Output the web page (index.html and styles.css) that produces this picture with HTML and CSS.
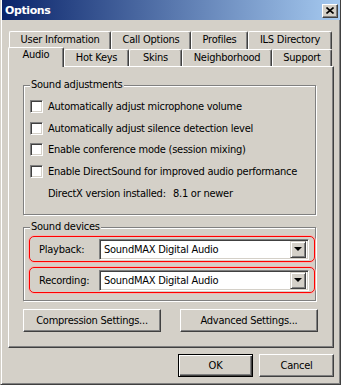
FILE: index.html
```html
<!DOCTYPE html>
<html lang="en">
<head>
    <meta charset="UTF-8">
    <title>Options</title>
    <link rel="stylesheet" href="styles.css">
</head>
<body>
    <div class="window">
        <div class="titlebar">
            <span class="title">Options</span>
            <button class="close-button" aria-label="Close">
                <svg width="8" height="7" viewBox="0 0 8 7">
                    <path d="M0.5 0.5 L7.5 6.5 M7.5 0.5 L0.5 6.5" stroke="#000" stroke-width="1.6" fill="none"/>
                </svg>
            </button>
        </div>

        <div class="tabs">
            <div class="tab-row upper">
                <div class="tab tab-user">User Information</div>
                <div class="tab tab-call">Call Options</div>
                <div class="tab tab-profiles">Profiles</div>
                <div class="tab tab-ils">ILS Directory</div>
            </div>
            <div class="tab-row lower">
                <div class="tab tab-audio active">Audio</div>
                <div class="tab tab-hotkeys">Hot Keys</div>
                <div class="tab tab-skins">Skins</div>
                <div class="tab tab-neighborhood">Neighborhood</div>
                <div class="tab tab-support">Support</div>
            </div>
        </div>

        <div class="panel">
            <fieldset class="group adjustments">
                <legend>Sound adjustments</legend>
                <div class="check-row"><span class="check"></span>Automatically adjust microphone volume</div>
                <div class="check-row"><span class="check"></span>Automatically adjust silence detection level</div>
                <div class="check-row"><span class="check"></span>Enable conference mode (session mixing)</div>
                <div class="check-row"><span class="check"></span>Enable DirectSound for improved audio performance</div>
                <div class="directx-row"><span class="directx-label">DirectX version installed:</span>8.1 or newer</div>
            </fieldset>

            <fieldset class="group devices">
                <legend>Sound devices</legend>
                <div class="device-row">
                    <span class="device-label">Playback:</span>
                    <div class="combo">
                        <span class="combo-value">SoundMAX Digital Audio</span>
                        <span class="combo-button"><span class="arrow"></span></span>
                    </div>
                </div>
                <div class="device-row">
                    <span class="device-label">Recording:</span>
                    <div class="combo">
                        <span class="combo-value">SoundMAX Digital Audio</span>
                        <span class="combo-button"><span class="arrow"></span></span>
                    </div>
                </div>
            </fieldset>

            <div class="panel-buttons">
                <button class="btn wide">Compression Settings...</button>
                <button class="btn wide">Advanced Settings...</button>
            </div>
        </div>

        <div class="footer">
            <button class="btn default">OK</button>
            <button class="btn">Cancel</button>
        </div>
    </div>
</body>
</html>
```

FILE: styles.css
```css
body {
    margin: 0;
    font-family: "DejaVu Sans Condensed", "DejaVu Sans", sans-serif;
    font-stretch: condensed;
    font-size: 11px;
    letter-spacing: -0.25px;
    color: #000;
}
.window {
    width: 341px;
    height: 385px;
    box-sizing: border-box;
    background: #d4d0c8;
    border-left: 1px solid #d4d0c8;
    border-right: 1px solid #404040;
    border-bottom: 1px solid #404040;
    box-shadow: inset 1px 0 #fff, inset -1px -1px #808080;
}
.titlebar {
    display: flex;
    align-items: center;
    justify-content: space-between;
    height: 20px;
    margin-left: 1px;
    padding: 1px 2px 0 3px;
    box-sizing: border-box;
    background: linear-gradient(to right, #0a246a, #a6caf0);
}
.title {
    color: #fff;
    font-family: "DejaVu Sans", sans-serif;
    font-stretch: normal;
    font-weight: bold;
    font-size: 11px;
    letter-spacing: -0.4px;
}
.close-button {
    width: 16px;
    height: 14px;
    padding: 0;
    display: flex;
    align-items: center;
    justify-content: center;
    background: #d4d0c8;
    border: 1px solid;
    border-color: #fff #404040 #404040 #fff;
    box-shadow: inset -1px -1px #808080;
}

/* tabs */
.tabs {
    margin-top: 11px;
}
.tab-row {
    display: flex;
}
.tab-row.upper {
    margin-left: 8px;
    height: 18px;
}
.tab-row.lower {
    margin-left: 7px;
    height: 17px;
    align-items: flex-end;
}
.tab {
    box-sizing: border-box;
    height: 100%;
    background: #d4d0c8;
    border-top: 1px solid #fff;
    border-left: 1px solid #fff;
    border-right: 1px solid #404040;
    border-radius: 2px 2px 0 0;
    box-shadow: inset -1px 0 #808080;
    text-align: center;
    line-height: 16px;
    white-space: nowrap;
}
.tab.active {
    position: relative;
    z-index: 1;
    height: 20px;
    margin-bottom: -1px;
    line-height: 14px;
}
.tab-user { width: 102px; }
.tab-call { width: 80px; }
.tab-profiles { width: 57px; }
.tab-ils { width: 84px; }
.tab-audio { width: 56px; }
.tab-hotkeys { width: 65px; }
.tab-skins { width: 53px; }
.tab-neighborhood { width: 90px; }
.tab-support { width: 60px; }

/* panel */
.panel {
    margin-left: 7px;
    width: 326px;
    height: 282px;
    box-sizing: border-box;
    border-top: 1px solid #fff;
    border-left: 1px solid #fff;
    border-right: 1px solid #404040;
    border-bottom: 1px solid #404040;
    box-shadow: inset -1px -1px #808080;
    padding: 11px 0 0 14px;
}
.group {
    width: 293px;
    margin: 0;
    box-sizing: border-box;
    border: 1px solid #808080;
    box-shadow: inset 1px 1px #fff, 1px 1px #fff;
    min-width: 0;
}
.group legend {
    padding: 0 1px;
    line-height: 14px;
    background: #d4d0c8;
}
.adjustments {
    padding: 4px 0 11px 6px;
}
.devices {
    margin-top: 5px;
    padding: 2px 0 7px 5px;
}
.devices legend {
    margin-left: 1px;
}
.check-row {
    display: flex;
    align-items: center;
    gap: 5px;
    height: 21.5px;
}
.check {
    width: 13px;
    height: 13px;
    box-sizing: border-box;
    background: #fff;
    border: 1px solid;
    border-color: #808080 #fff #fff #808080;
    box-shadow: inset 1px 1px #404040, inset -1px -1px #d4d0c8;
}
.directx-row {
    height: 18px;
    line-height: 18px;
    margin-top: 3px;
    padding-left: 18px;
}
.directx-label {
    display: inline-block;
    width: 125px;
}
.device-row {
    display: flex;
    align-items: center;
    width: 286px;
    height: 26px;
    box-sizing: border-box;
    border: 1px solid #f00;
    border-radius: 5px;
    box-shadow: 0 0 0 1px #f4b4b0;
    padding-left: 9px;
}
.device-row + .device-row {
    margin-top: 5px;
}
.device-label {
    width: 60px;
}
.combo {
    display: flex;
    align-items: center;
    justify-content: space-between;
    width: 210px;
    height: 21px;
    box-sizing: border-box;
    background: #fff;
    border: 1px solid;
    border-color: #808080 #fff #fff #808080;
    box-shadow: inset 1px 1px #404040, inset -1px -1px #d4d0c8;
    padding: 2px 2px 2px 4px;
}
.combo-button {
    display: flex;
    align-items: center;
    justify-content: center;
    width: 16px;
    height: 17px;
    box-sizing: border-box;
    background: #d4d0c8;
    border: 1px solid;
    border-color: #d4d0c8 #404040 #404040 #d4d0c8;
    box-shadow: inset 1px 1px #fff, inset -1px -1px #808080;
}
.arrow {
    width: 0;
    height: 0;
    border-left: 4px solid transparent;
    border-right: 4px solid transparent;
    border-top: 4px solid #000;
}
.panel-buttons {
    display: flex;
    gap: 19px;
    margin-top: 8px;
}

/* buttons */
.btn {
    width: 75px;
    height: 23px;
    box-sizing: border-box;
    padding: 0;
    font: inherit;
    letter-spacing: inherit;
    color: #000;
    background: #d4d0c8;
    border: 1px solid;
    border-color: #fff #404040 #404040 #fff;
    box-shadow: inset -1px -1px #808080;
}
.btn.wide {
    width: 138px;
}
.btn.default {
    border-color: #000;
    box-shadow: inset 1px 1px #fff, inset -1px -1px #404040, inset -2px -2px #808080;
}
.footer {
    display: flex;
    justify-content: flex-end;
    gap: 6px;
    margin-top: 6px;
    padding-right: 6px;
}
```
